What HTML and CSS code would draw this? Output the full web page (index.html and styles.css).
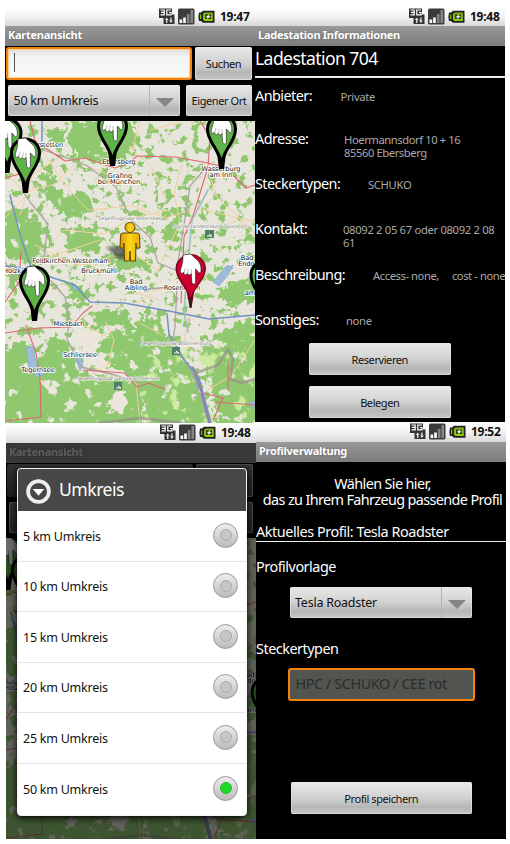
FILE: index.html
```html
<!DOCTYPE html>
<html lang="de">
<head>
<meta charset="utf-8">
<title>Ladestationen</title>
<link rel="stylesheet" href="styles.css">
</head>
<body>
<svg class="defs" width="0" height="0" aria-hidden="true">
  <defs>
    <filter id="woods" x="0" y="0" width="1" height="1" color-interpolation-filters="sRGB">
      <feTurbulence type="fractalNoise" baseFrequency="0.11" numOctaves="4" seed="11"/>
      <feColorMatrix values="0 0 0 0 .565  0 0 0 0 .78  0 0 0 0 .43  14 0 0 0 -7.9"/>
    </filter>
    <filter id="clearings" x="0" y="0" width="1" height="1" color-interpolation-filters="sRGB">
      <feTurbulence type="fractalNoise" baseFrequency="0.08" numOctaves="4" seed="4"/>
      <feColorMatrix values="0 0 0 0 .91  0 0 0 0 .9  0 0 0 0 .85  0 14 0 0 -8.9"/>
    </filter>
    <filter id="meadows" x="0" y="0" width="1" height="1" color-interpolation-filters="sRGB">
      <feTurbulence type="fractalNoise" baseFrequency="0.06" numOctaves="4" seed="23"/>
      <feColorMatrix values="0 0 0 0 .8  0 0 0 0 .92  0 0 0 0 .62  0 0 12 0 -6.900"/>
    </filter>
    <filter id="rough" x="-.1" y="-.1" width="1.2" height="1.2">
      <feTurbulence type="fractalNoise" baseFrequency="0.12" numOctaves="3" seed="7"/>
      <feDisplacementMap in="SourceGraphic" scale="16" xChannelSelector="R" yChannelSelector="G"/>
    </filter>
    <filter id="soft"><feGaussianBlur stdDeviation="1.5"/></filter>
    <linearGradient id="batt" x2="0" y2="1"><stop stop-color="#7fae1a"/><stop offset="1" stop-color="#8fd000"/></linearGradient>
    <linearGradient id="man"><stop stop-color="#d99a00"/><stop offset=".5" stop-color="#ffd91c"/><stop offset="1" stop-color="#e8a900"/></linearGradient>

    <symbol id="status" viewBox="0 0 58 18">
      <path d="M1 .5h13v6h2.500v9.500H5.500v-6H1z" fill="#333"/>
      <path d="M2.500 2h3.700v4.800H2.500M3 4.400h3M13 2H8.800v4.800H13V4.500h-2" fill="none" stroke="#fff" stroke-width="1.200"/>
      <path d="M8 15v-3H6.700L8.700 9.500l2 2.500H9.400v3zM12.200 9.500v3h-1.300l2 2.500 2-2.500h-1.300v-3z" fill="#ddd"/>
      <rect x="20" y=".5" width="16.500" height="16" rx="1.500" fill="#3b3b3b"/>
      <path d="M21.500 11.500h2.700V15h-2.700zM25.200 9.500h2.600V15h-2.600z" fill="#fff"/>
      <path d="M28.900 6h2.600v9h-2.600zM32.500 2h2.600v13h-2.600z" fill="#858585"/>
      <path d="M45 2.700h11.500v12H45L43 13H41q-1.200-4.300 0-8.500h2z" fill="#222"/>
      <path d="M46.500 4.400h8.300v8.600h-8.300l-1.500-1.500V6z" fill="url(#batt)"/>
      <path d="M42 6.500h1.200v4.500H42z" fill="#8bc400"/>
      <path d="M47 6.500h6v4.500h-6z" fill="#2d3a10"/>
      <path d="M51.500 6l-4 3.200h2.300l-1.300 2.300 4.500-3.200h-2.400z" fill="#fff"/>
    </symbol>

    <g id="hand" fill="#fff" stroke="#222" stroke-width=".6" stroke-linejoin="round" transform="translate(0 -40) scale(1.08) translate(0 40)">
      <path d="M-7-53L0-54L4-50C8-47 10-44 9.500-38C9-36 7-36 6.500-38L4.500-40V-28C4.500-25.500 1.500-25.500 1-28L.5-36C0-34-2.500-34-3-36C-4-34-6-34-6.500-37C-8-35-10-36-9.500-39L-7.500-46Z"/>
      <path d="M-6-37l1-4M-2.700-36l.5-4.500M.5-36v-4" fill="none" stroke="#999"/>
    </g>
    <g id="pin">
      <path d="M-2.500 0L-4-12C-6-20-15.500-29-15.500-40A15.500 15.500 0 0 1 15.500-40C15.500-29 6-20 4-12L2.500 0Z" fill="#000"/>
      <path d="M0-11C-3-21-12.500-30-12.500-40A12.500 12.500 0 0 1 12.500-40C12.500-30 3-21 0-11Z" fill="#5fb448"/>
      <use href="#hand"/>
    </g>

    <symbol id="map" viewBox="5 121 250 302">
      <rect x="5" y="121" width="250" height="302" fill="#e8e6dc"/>
      <rect x="5" y="121" width="250" height="302" filter="url(#woods)"/>
      <g fill="#90c86f" filter="url(#rough)">
        <path d="M76 121h52l12 18-10 22-30 3-22-8-9-15zM22 166l28 8 16 22 20-4 8 18-18 8-26-6-12-22zM4 205l24 6 22 22 2 24-20 8-28-8zM164 208h18l-4 35-12-2zM48 128l18-4-4 30-14-10zM66 226l24 4 20 14-24 10-20-8zM60 280l20 6 14 22-16-4zM90 312l32-2 14 22-20-8-22 6zM136 315l22 6-6 18-18-6zM100 256l28-6 26 10-26 14zM222 288l34-14v26l-28 8z"/>
        <path d="M-10 352l38-12 10 34 10 8 2 60h-60zM48 336l24 6 6 30 40 14 24 8 4 44H46l-2-34-8-24zM90 348l26-14 46-2 18 20 20 26 18 60h-70l-4-40-24-10-24-12zM200 350l22-20 46-20v120h-50l-8-40z"/>
      </g>
      <rect x="5" y="121" width="250" height="302" filter="url(#clearings)"/>
      <rect x="140" y="340" width="115" height="83" filter="url(#meadows)"/>
      <g fill="#ece6dd" filter="url(#rough)">
        <circle cx="51" cy="207" r="6"/><circle cx="22" cy="202" r="7"/><circle cx="74" cy="187" r="6"/><circle cx="52" cy="248" r="5"/><circle cx="35" cy="172" r="6"/>
        <path d="M40 378l14 6 4 10-12-2zM114 392l14-2-4 20-16 4zM172 282l16-4 8 10-12 8-16-6zM74 330l12 24 14 22 30 4-6-10-22-6-10-38z"/>
      </g>
      <g fill="#9cbcd9" stroke="#82a8ca" stroke-width=".6">
        <path d="M26 348l7-2 4 20 8 8-8 3-8-8z"/><path d="M75 358l6-1 2 9-3 4z"/><path d="M213 282l8-10 12-7-5 10-9 11zM224 268l4-3 5 3-4 3zM248 403l7-2v8zM72 285l6 2 2 4-6-2z"/>
      </g>
      <g fill="none" stroke-linecap="round" stroke-linejoin="round">
        <g stroke="#f3cfa0" stroke-width="1">
          <path d="M5 172l20 20 30-8 22-22 30 12M42 150l22 34 24 26 44-4 34 12 30-10 60 14M20 215l12-40 28-18M52 242l12-12 40 4 28-16 38-8M140 121l-8 28 20 18 14 34M182 165l-8 28 6 30-22 46M206 165l12 34 30 26M88 270l22-14 30 2 20 14M106 322l8 18-6 26M72 320l38 18M92 367l44 16 4 40M136 305l20-15 20-4M190 315l-6 24 8 12M255 340l-24 36-24 14M35 245l40 20 28-2M214 230l24-10 17 14M150 130l30-8M5 218l34-36M40 260l60-20M26 310l28-24M140 323l22 12M132 292l28 8"/>
        </g>
        <g stroke="#aaa5a5" stroke-width="1.300">
          <path d="M38 148l48 17 30 22 16 34 18 16 8 26 20 8M22 190l8 12 18 22-4 34M204 170l-14 16-4 26-8 50M51 281l14 16 4 26-2 16 14 28 34 8 26 8M5 262l18 30M177 287l-2 40-2 12 20 36 16 46M170 287l-30 3"/>
        </g>
        <g stroke="#dd6870" stroke-width="1.100">
          <path d="M30 121l5 20 12 8 18 12 20-3 30 10 14-5 8-7 38 1 28 5 30 7M200 121l10 16-2 30-14 46-10 24-3 66M5 178l22-6M5 302l14-20 2-30M5 333l34-5 32-1 12-14 9-7M26 325l10 28 4 25 1 39-36 4M83 370l42 3 12 14 12-4 15 6M213 420l10-22-20-5M215 402l40 3M228 390v-28M234 176l12 12 9-3"/>
        </g>
        <g stroke="#7391c3" stroke-width="1.500">
          <path d="M5 266l18 2 52 17 15 17 34 1 45 8 40 8 46-4M167 314l2 20 12 22 18 22 12 45M10 195l10 40 12 35M42 121v20"/>
        </g>
        <path d="M208 190l-16 30-4 42-4 50 4 20" stroke="#9cc0c0" stroke-width="1.600"/>
        <path d="M193 368l8 22 8 32" stroke="#8c85b3" stroke-width="2.500"/>
        <path d="M100 423l40-5 42 5M196 373l22-8 10-16 5 10-3 20 12 4 13-4" stroke="#988d8a" stroke-width="2.600" opacity=".7"/>
      </g>
      <g class="map-air">
        <text x="131" y="220">Segelflugplatz Antersberg</text><text x="210" y="228">Sonderlandeplatz Vogtareuth</text>
        <text x="176" y="345">Segelflugplatz Brannenburg</text><text x="118" y="380">Segelflugplatz Geitau/Schliersee</text>
      </g>
      <g fill="#4f8067"><path d="M205 230h9v8h-9zM172 347h8v8h-8zM114 382h8v8h-8z"/></g>
      <path d="M207 236h5l-3-2M174 353h5l-3-2M116 388h5l-3-2" fill="none" stroke="#fff"/>
      <g class="map-town">
        <text x="48" y="147">erstetten</text><text x="119" y="164">Ebersberg</text><text x="120" y="178">Grafing</text><text x="119" y="184">bei München</text>
        <text x="221" y="171">Wasserburg</text><text x="221" y="176.500">am Inn</text>
        <text x="71" y="263">Feldkirchen-Westerham</text><text x="99" y="273">Bruckmühl</text><text x="13" y="273">Holzki</text>
        <text x="136" y="284">Bad</text><text x="136" y="289.500">Aibling</text><text x="182" y="290">Rosenheim</text>
        <text x="247" y="260">Bad</text><text x="249" y="265.500">Endorf</text><text x="250" y="295">am</text>
        <text x="69" y="326">Miesbach</text><text x="80" y="357">Schliersee</text><text x="38" y="372">Tegernsee</text>
      </g>
      <use href="#pin" x="7" y="173"/><use href="#pin" x="25.500" y="193"/><use href="#pin" x="112.500" y="166"/>
      <use href="#pin" x="221.500" y="169"/><use href="#pin" x="34.500" y="321"/><use href="#pin" x="265" y="315"/>
      <path d="M189.700 308L187 293C185 286 175.500 279 175.500 268A15.300 15.300 0 0 1 206 268C206 279 196 286 194 293L191.500 308Z" fill="#7c0018"/>
      <path d="M190.700 298C188 287 177 279 177 268A13.800 13.800 0 0 1 204.500 268C204.500 279 193 287 190.700 298Z" fill="#cb0030"/>
      <path d="M190.700 298v9" stroke="#222" stroke-width="2"/>
      <use href="#hand" x="190.700" y="309"/>
      <path d="M106 247l18-1 8 14-14-1z" fill="#222" opacity=".6" filter="url(#soft)"/>
      <g fill="url(#man)" stroke="#5b4708" stroke-width="1">
        <path d="M120.500 235q0-2 3-2h13q3 0 3 2l.5 13h-3.500l-.5-5-.5 18h-5l-.5-10-.5 10h-5l-.5-18-.5 5H120z"/>
        <circle cx="130" cy="227.500" r="5"/>
      </g>
    </symbol>
  </defs>
</svg>

<main class="board">
  <section class="screen map-screen">
    <header class="status"><svg class="status-icons"><use href="#status"/></svg><time>19:47</time></header>
    <h1 class="title">Kartenansicht</h1>
    <div class="toolbar">
      <div class="field focus"><i class="caret"></i></div>
      <button class="btn">Suchen</button>
      <div class="spinner"><span>50 km Umkreis</span><i class="drop"></i></div>
      <button class="btn own">Eigener Ort</button>
    </div>
    <svg class="map"><use href="#map"/></svg>
  </section>

  <section class="screen info-screen">
    <header class="status"><svg class="status-icons"><use href="#status"/></svg><time>19:48</time></header>
    <h1 class="title">Ladestation Informationen</h1>
    <h2 class="station">Ladestation 704</h2>
    <dl class="facts">
      <div class="r1"><dt>Anbieter:</dt><dd>Private</dd></div>
      <div class="r2"><dt>Adresse:</dt><dd>Hoermannsdorf 10 + 16<br>85560 Ebersberg</dd></div>
      <div class="r3"><dt>Steckertypen:</dt><dd>SCHUKO</dd></div>
      <div class="r4"><dt>Kontakt:</dt><dd>08092 2 05 67 oder 08092 2 08<br>61</dd></div>
      <div class="r5"><dt>Beschreibung:</dt><dd>Access- none,</dd><dd class="cost">cost - none</dd></div>
      <div class="r6"><dt>Sonstiges:</dt><dd>none</dd></div>
    </dl>
    <div class="actions">
      <button class="btn">Reservieren</button>
      <button class="btn">Belegen</button>
    </div>
  </section>

  <section class="screen dialog-screen">
    <header class="status"><svg class="status-icons"><use href="#status"/></svg><time>19:48</time></header>
    <div class="behind">
      <h1 class="title">Kartenansicht</h1>
      <div class="toolbar">
        <div class="field"></div>
        <button class="btn"></button>
        <div class="spinner"></div>
        <button class="btn own"></button>
      </div>
      <svg class="map"><use href="#map"/></svg>
    </div>
    <div class="dialog">
      <h2><svg class="dialog-icon" viewBox="0 0 24 24"><circle cx="12" cy="12" r="10" fill="none" stroke="#eee" stroke-width="3.600"/><path d="M6.500 9.500h11L12 16z" fill="#fff"/></svg><span>Umkreis</span></h2>
      <ul>
        <li><span>5 km Umkreis</span><i class="radio"></i></li>
        <li><span>10 km Umkreis</span><i class="radio"></i></li>
        <li><span>15 km Umkreis</span><i class="radio"></i></li>
        <li><span>20 km Umkreis</span><i class="radio"></i></li>
        <li><span>25 km Umkreis</span><i class="radio"></i></li>
        <li><span>50 km Umkreis</span><i class="radio on"></i></li>
      </ul>
    </div>
  </section>

  <section class="screen profile-screen">
    <header class="status"><svg class="status-icons"><use href="#status"/></svg><time>19:52</time></header>
    <h1 class="title">Profilverwaltung</h1>
    <p class="intro">Wählen Sie hier,<br>das zu Ihrem Fahrzeug passende Profil</p>
    <p class="current">Aktuelles Profil: Tesla Roadster</p>
    <p class="label">Profilvorlage</p>
    <div class="spinner"><span>Tesla Roadster</span><i class="drop"></i></div>
    <p class="label plugs">Steckertypen</p>
    <div class="field focus disabled">HPC / SCHUKO / CEE rot</div>
    <button class="btn save">Profil speichern</button>
  </section>
</main>
</body>
</html>
```
FILE: styles.css
```css
* { box-sizing: border-box; margin: 0; padding: 0; }
body {
  width: 510px; height: 844px; overflow: hidden; background: #fff;
  font-family: "Noto Sans", "Open Sans", sans-serif; font-size: 11.2px; color: #fff;
}
.defs { position: absolute; }
.board { display: grid; grid-template: 415px 421px / 250px 250px; padding: 8px 0 0 5px; }
.screen { display: flex; flex-direction: column; overflow: hidden; background: #000; white-space: nowrap; }
.info-screen { height: 414px; }
.dialog-screen { position: relative; margin-left: 1px; width: 250px; height: 416px; }
.profile-screen { margin: -1px 0 0 1px; width: 250px; height: 417px; }

.status {
  flex: none; height: 18px; padding-right: 5px; display: flex; justify-content: flex-end; align-items: flex-start;
  background: linear-gradient(#fefefe, #f2f2f2 50%, #d8d8d8); color: #111;
}
.dialog-screen .status, .profile-screen .status { height: 20px; padding-top: 1px; }
.status-icons { width: 58px; height: 18px; margin-right: 4px; }
.status time { font: bold 12px/17px "Noto Sans", sans-serif; letter-spacing: -.25px; width: 30px; }
.title {
  flex: none; height: 19.500px; padding-left: 3px; background: linear-gradient(#999, #7c7c7c);
  font-size: 11px; line-height: 18px; font-weight: bold; letter-spacing: -.27px; text-shadow: 0 0 2px #666;
}

.btn, .spinner {
  border: 0; border-radius: 2px; background: linear-gradient(#e9e9e9, #d2d2d2 48%, #b6b6b6 78%, #c6c6c6);
  box-shadow: inset 0 0 0 1px rgba(235,235,235,.55); color: #111; font: 11px "Noto Sans", sans-serif; letter-spacing: -.42px;
}
.spinner { display: flex; align-items: stretch; font-size: 12.500px; line-height: 32px; letter-spacing: -.24px; padding-left: 6px; }
.spinner span { flex: 1; }
.drop { width: 31px; display: flex; align-items: center; justify-content: center; border-left: 1px solid #b4b4b4; }
.drop::before { content: ""; border: 9px solid transparent; border-top: 9px solid #858585; border-bottom: 0; margin-top: 3px; }
.field { border-radius: 3px; background: linear-gradient(#ddd, #f3f3f3 25%, #fafafa); }
.focus { border: 2px solid #f5820f; box-shadow: inset 0 0 1px 1px #ffcf94; }
.caret { display: block; width: 1px; height: 19px; margin: 4px 0 0 6px; background: #555; }

.toolbar {
  flex: none; height: 75.500px; padding: 1px 3px 0 2.500px; display: grid;
  grid-template: 33px 31px / 172.500px 6px 9px 57px; row-gap: 5.500px;
}
.toolbar .field { grid-column: 1 / 3; margin: 0 -6px 0 -2px; width: 186.500px; }
.toolbar .btn { grid-column: 4; width: 57px; }
.toolbar .own { margin-left: -9px; width: 66px; }
.toolbar .spinner { grid-column: 1; }
.map { flex: none; width: 250px; height: 302px; display: block; }
.map-town { font: 6.600px "DejaVu Sans", sans-serif; text-anchor: middle; fill: #111; stroke: #fff; stroke-width: 1.600px; paint-order: stroke; }
.map-air { font: 5.100px "DejaVu Sans", sans-serif; text-anchor: middle; fill: #777; stroke: #fff; stroke-width: .8px; paint-order: stroke; }

.station { height: 32.500px; border-bottom: 2px solid #eee; font-size: 17.600px; font-weight: normal; line-height: 24px; letter-spacing: -.6px; }
.facts { display: grid; grid-template-rows: 43px 45px 45px 46px 45px 34px; padding-top: 8px; }
.facts div { display: flex; }
.facts dt { font-size: 14.400px; line-height: 20px; letter-spacing: -.53px; }
.facts dd { padding-top: 5px; font-size: 11.200px; line-height: 12.700px; letter-spacing: -.3px; color: #aaa; }
.facts .r2 dd { letter-spacing: -.41px; }
.facts .r5 dd { letter-spacing: -.42px; }
.r1 dt { width: 85.500px; } .r2 dt { width: 89px; } .r3 dt { width: 113px; }
.r4 dt { width: 88px; } .r5 dt { width: 118px; } .r6 dt { width: 91px; }
.facts .cost { margin-left: 13px; }
.actions { display: grid; grid-template: 32px 32px / 142.500px; row-gap: 11px; padding-left: 53.500px; margin-top: -.6px; }

.behind { filter: brightness(.42); }
.behind .title { background: #858585; color: #ddd; }
.behind .field, .behind .btn, .behind .spinner { background: linear-gradient(#777, #484848); }
.dialog {
  position: absolute; left: 11px; top: 45px; width: 230px; height: 348px;
  background: #fff; border: 1.500px solid #f5f5f5; border-radius: 4px; overflow: hidden; box-shadow: 0 2px 7px #000;
}
.dialog h2 { height: 42px; padding-left: 8px; display: flex; align-items: center; background: #484848; font-size: 17.600px; font-weight: normal; letter-spacing: -.5px; }
.dialog h2 span { margin-top: -2px; }
.dialog-icon { width: 25px; height: 25px; margin: 2px 8px 0 0; }
.dialog ul { list-style: none; color: #111; font-size: 12.500px; letter-spacing: -.24px; }
.dialog li { height: 50.500px; padding: 1px 8px 0 5px; display: flex; align-items: center; justify-content: space-between; border-bottom: 1px solid #e4e4e4; }
.dialog li:last-child { border: 0; }
.radio {
  width: 25px; height: 25px; border-radius: 50%; border: 1px solid #999; margin-top: -2px;
  display: flex; align-items: center; justify-content: center; background: linear-gradient(#eee, #bbb);
}
.radio::before { content: ""; width: 10px; height: 10px; border: 1px solid #aaa; border-radius: 50%; background: #c6c6c6; }
.radio.on::before { background: #1edb28; border-color: #2db535; }

.intro { padding: 14px 1px 0 0; height: 62px; display: flow-root; text-align: center; font-size: 14.400px; line-height: 16px; letter-spacing: -.62px; margin: 0 0 0 4px; }
.current { height: 18px; border-bottom: 1.500px solid #eee; font-size: 14.400px; line-height: 16px; letter-spacing: -.43px; }
.label { height: 45.500px; padding-top: 15px; font-size: 14.400px; line-height: 20px; letter-spacing: -.48px; }
.profile-screen .spinner { flex: none; width: 181.500px; height: 31px; margin-left: 34px; padding-left: 5px; }
.plugs { padding-top: 21px; height: 49.500px; }
.disabled { width: 187.500px; height: 33.500px; margin-left: 31.500px; padding-left: 6px; background: #525450; box-shadow: none; color: #2b2d2a; font-size: 14.400px; line-height: 28px; letter-spacing: -.42px; }
.save { width: 181.500px; height: 32px; margin: 81px 0 0 34.500px; }
```
